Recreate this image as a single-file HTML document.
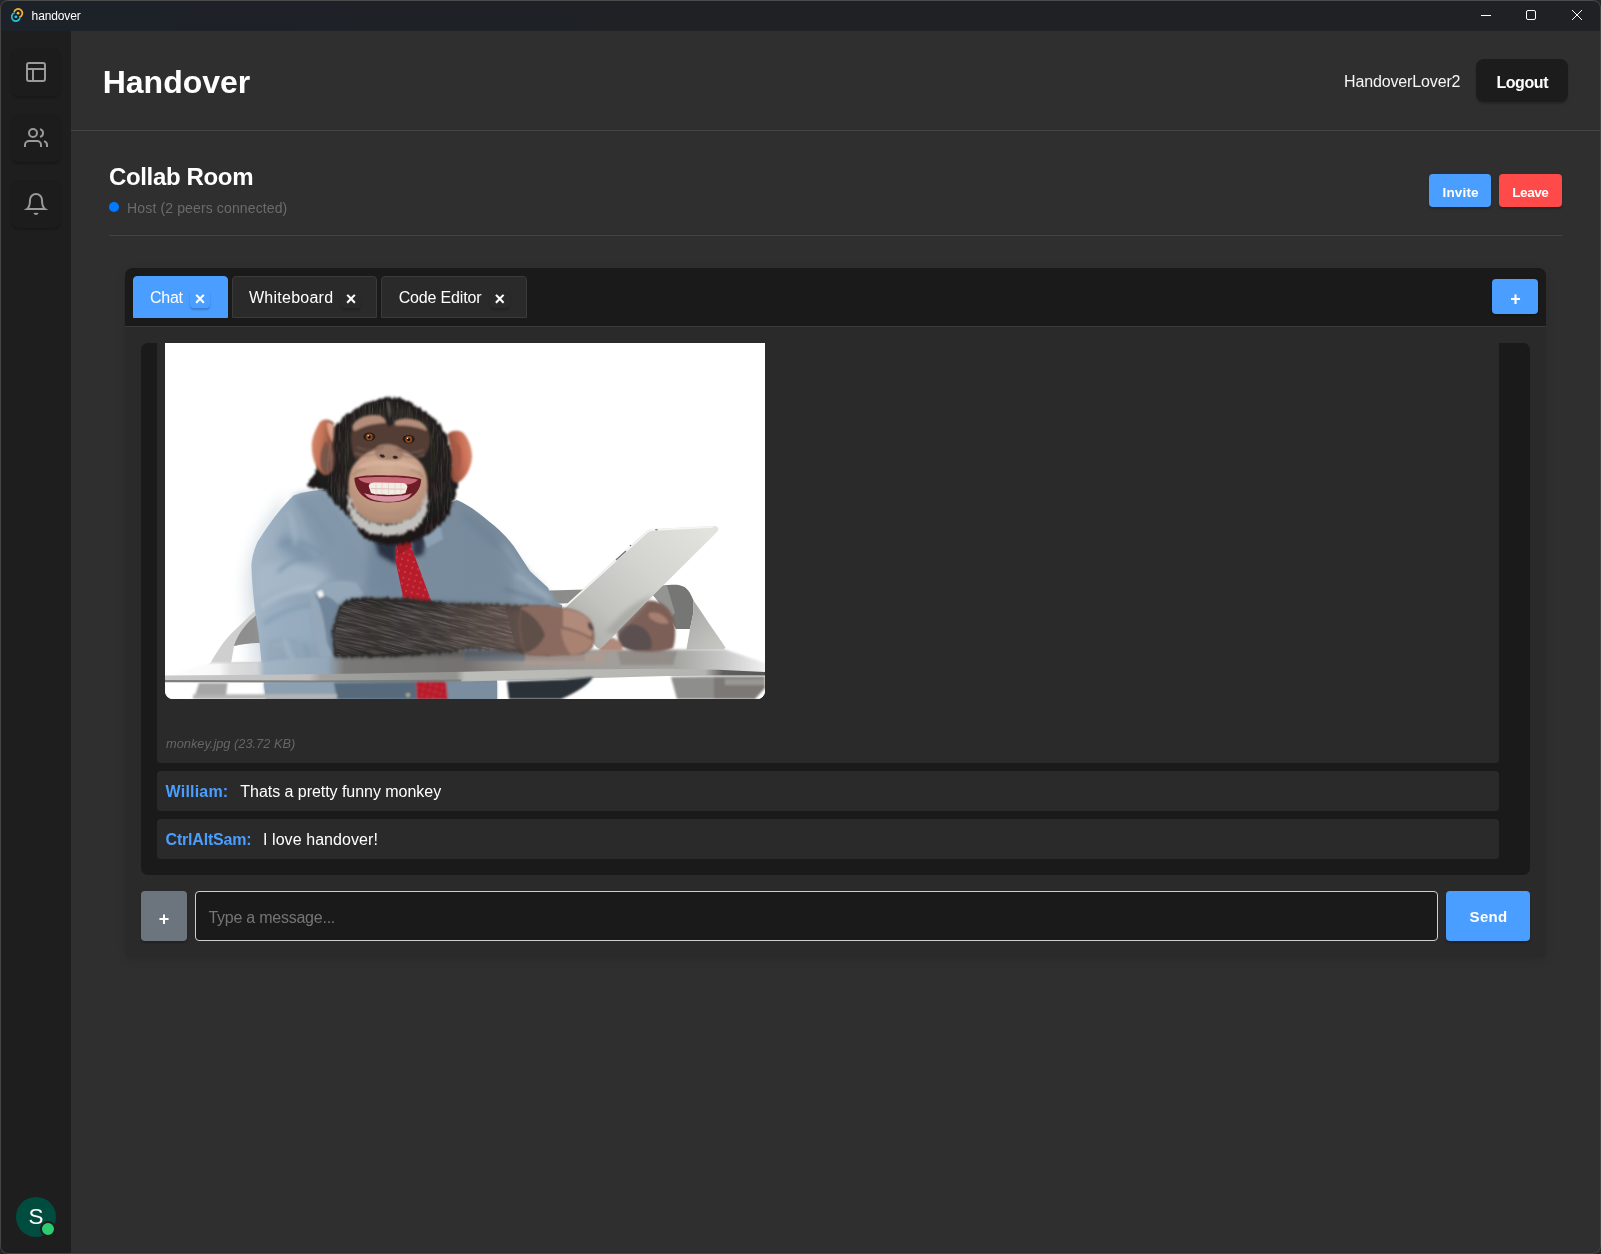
<!DOCTYPE html>
<html lang="en">
<head>
<meta charset="utf-8">
<title>handover</title>
<style>
*{box-sizing:border-box;margin:0;padding:0}
html,body{width:1601px;height:1254px;overflow:hidden;background:#26262a}
body{font-family:"Liberation Sans",sans-serif;color:#f6f6f6;position:relative;font-size:16px}
.abs{position:absolute}
#win{will-change:transform;position:absolute;left:0;top:0;width:1601px;height:1254px;background:#2f2f2f;border:1px solid #454545;border-top-color:#4b4b4b;border-radius:8px;overflow:hidden}
#titlebar{position:absolute;left:0;top:0;width:1601px;height:30px;background:linear-gradient(90deg,#1d2129 0,#1f2125 40%,#202124 100%)}
#titlebar .ttl{letter-spacing:-0.12px;position:absolute;left:30.6px;top:8px;font-size:12px;line-height:14px;color:#fff}
#sidebar{position:absolute;left:0;top:30px;width:70px;height:1224px;background:#1e1e1e}
.sbtn{position:absolute;left:10px;width:50px;height:48px;border-radius:8px;background:#1c1c1c;box-shadow:0 2px 2px rgba(0,0,0,.2)}
.sbtn svg{position:absolute;left:13px;top:12px}
#header{position:absolute;left:70px;top:30px;width:1531px;height:100px;border-bottom:1px solid #444}
#header h1{position:absolute;left:31.7px;top:31px;font-size:32px;line-height:40px;font-weight:700;color:#fff}
#uname{letter-spacing:-0.14px;position:absolute;left:1273px;top:40.6px;font-size:16px;line-height:20px;color:#f6f6f6;white-space:nowrap}
#logout{position:absolute;left:1405px;top:28px;width:92px;height:42.5px;border-radius:8px;background:#1c1c1c;box-shadow:0 2px 2px rgba(0,0,0,.2);color:#fff;font-weight:700;font-size:16px;line-height:42px;text-align:left;padding-left:20.4px;padding-top:2.8px;letter-spacing:-0.42px}
#roomtitle{position:absolute;left:108px;top:160px;font-size:24px;line-height:32px;font-weight:700;color:#fff;white-space:nowrap;letter-spacing:-0.35px}
#dot{position:absolute;left:108px;top:201px;width:10px;height:10px;border-radius:50%;background:#007bff}
#status{letter-spacing:0.13px;position:absolute;left:126.1px;top:198px;font-size:14px;line-height:18px;color:#6b6b6b;white-space:nowrap}
.btn{position:absolute;height:33px;border-radius:4px;color:#fff;font-weight:700;font-size:13.5px;line-height:33px;padding-top:2.2px;text-align:left;box-shadow:0 2px 2px rgba(0,0,0,.2)}
#invite{left:1428px;top:173px;width:62px;background:#4a9eff;padding-left:13.6px;letter-spacing:0.14px}
#leave{left:1498px;top:173px;width:63px;background:#ff4a4a;padding-left:13.2px;letter-spacing:-0.4px}
#hr{position:absolute;left:108px;top:234px;width:1453px;height:1px;background:#444}
#panel{position:absolute;left:124px;top:267px;width:1421px;height:690px;border-radius:8px;background:#2a2a2a;overflow:hidden;box-shadow:0 2px 8px rgba(0,0,0,.1)}
#tabbar{position:absolute;left:0;top:0;width:1421px;height:59px;background:#1a1a1a;border-bottom:1px solid #3a3a3a}
.tab{position:absolute;top:8px;height:42px;border:1px solid #3a3a3a;border-radius:4px 4px 0 0;background:#2a2a2a;color:#fff;font-size:16px;line-height:40px;white-space:nowrap}
.tab.act{background:#4a9eff;border-color:#4a9eff}
.tab .lbl{position:absolute;left:16px;top:1px}
.tab .x{position:absolute;top:12px;width:20px;height:18px;border-radius:4px;box-shadow:0 2px 2px rgba(0,0,0,.2);font-size:18px;font-weight:700;line-height:18px;text-align:center;color:#fff}
#plus{position:absolute;left:1367px;top:11px;width:46px;height:35px;border-radius:4px;background:#4a9eff;color:#fff;box-shadow:0 2px 2px rgba(0,0,0,.2)}
#msgs{position:absolute;left:16px;top:75px;width:1389px;height:532px;border-radius:7px;background:#1a1a1a;overflow:hidden}
.msg{position:absolute;left:16px;width:1342px;background:#2a2a2a;border-radius:4px}
.msg .who{position:absolute;left:8.6px;top:11.2px;font-weight:700;color:#4a9eff;font-size:16px;line-height:20px;white-space:nowrap}
.msg .txt{position:absolute;top:11.2px;font-size:16px;line-height:20px;color:#fff;white-space:nowrap}
#fname{position:absolute;left:9px;top:392px;font-size:12.8px;line-height:16px;font-style:italic;color:#666;white-space:nowrap}
#attach{position:absolute;left:16px;top:623px;width:46px;height:50px;border-radius:4px;background:#6c757d;box-shadow:0 2px 2px rgba(0,0,0,.2)}
#input{position:absolute;left:70px;top:623px;width:1243px;height:50px;border-radius:4px;background:#1a1a1a;border:1px solid #d0d0d0}
#input span{letter-spacing:-0.24px;position:absolute;left:12.4px;top:16px;font-size:16px;line-height:20px;color:#757575;white-space:nowrap}
#send{position:absolute;left:1321px;top:623px;width:84px;height:50px;border-radius:4px;background:#4a9eff;color:#fff;font-weight:700;font-size:15px;letter-spacing:0.3px;line-height:50px;text-align:left;padding-left:23.6px;padding-top:1.3px;box-shadow:0 2px 2px rgba(0,0,0,.2)}
#avatar{position:absolute;left:15px;top:1196px;width:40px;height:40px;border-radius:50%;background:#004d40;color:#fff;font-size:22.5px;line-height:40px;text-align:center}
#online{position:absolute;left:39.2px;top:1219.6px;width:16px;height:16px;border-radius:50%;background:#2ecc71;border:2px solid #1e1e1e}
#plus span,#attach span{position:absolute;left:0;width:100%;text-align:center;font-size:18px;font-weight:700;line-height:20px;color:#fff}
#plus span{top:10px;left:0.5px}
#attach span{top:18.2px}
</style>
</head>
<body>
<div id="win">
<div id="titlebar">
  <svg class="abs" style="left:8px;top:5.4px" width="16" height="18" viewBox="9 6 16 18"><g fill="none" stroke-width="1.7" stroke-linecap="butt"><path d="M14.1,12.0 A4.2,4.2 0 1 1 19.3,17.2" stroke="#f0b52c"/><path d="M19.9,18.0 A4.2,4.2 0 1 1 14.7,12.8" stroke="#25c2d6"/></g><circle cx="18.1" cy="13.2" r="1.4" fill="#f5bb2e"/><circle cx="15.9" cy="16.8" r="1.4" fill="#27cfe4"/></svg>
  <div class="ttl">handover</div>
  <svg class="abs" style="left:1469px;top:-1px" width="130" height="30" viewBox="1470 0 130 30"><g fill="none" stroke="#fff" stroke-width="1"><path d="M1481,15.5h10"/><rect x="1526.5" y="10.5" width="9" height="9" rx="1.5"/><path d="M1572,10l10,10M1582,10l-10,10"/></g></svg>
</div>
<div id="sidebar">
  <div class="sbtn" style="top:17px"><svg width="24" height="24" viewBox="0 0 24 24" fill="none" stroke="#9a9a9a" stroke-width="2" stroke-linecap="butt" stroke-linejoin="miter" stroke-miterlimit="10"><rect width="18" height="18" x="3" y="3" rx="2"/><path d="M3 9h18"/><path d="M9 21V9"/></svg></div>
  <div class="sbtn" style="top:83px"><svg width="24" height="24" viewBox="0 0 24 24" fill="none" stroke="#9a9a9a" stroke-width="2" stroke-linecap="butt" stroke-linejoin="miter" stroke-miterlimit="10"><path d="M17 21v-2a4 4 0 0 0-4-4H5a4 4 0 0 0-4 4v2"/><circle cx="9" cy="7" r="4"/><path d="M23 21v-2a4 4 0 0 0-3-3.87"/><path d="M16 3.13a4 4 0 0 1 0 7.75"/></svg></div>
  <div class="sbtn" style="top:149px"><svg width="24" height="24" viewBox="0 0 24 24" fill="none" stroke="#9a9a9a" stroke-width="2" stroke-linecap="butt" stroke-linejoin="miter" stroke-miterlimit="10"><path d="M18 8A6 6 0 0 0 6 8c0 7-3 9-3 9h18s-3-2-3-9"/><path d="M13.73 21a2 2 0 0 1-3.46 0"/></svg></div>
</div>
<div id="avatar">S</div><div id="online"></div>
<div id="header">
  <h1>Handover</h1>
  <div id="uname">HandoverLover2</div>
  <div id="logout">Logout</div>
</div>
<div id="roomtitle">Collab Room</div>
<div id="dot"></div>
<div id="status">Host (2 peers connected)</div>
<div class="btn" id="invite">Invite</div>
<div class="btn" id="leave">Leave</div>
<div id="hr"></div>
<div id="panel">
  <div id="tabbar">
    <div class="tab act" style="left:8px;width:95px"><span class="lbl" style="letter-spacing:-0.27px">Chat</span><span class="x" style="left:56px;top:13px">×</span></div>
    <div class="tab" style="left:107px;width:145px"><span class="lbl" style="letter-spacing:0.25px">Whiteboard</span><span class="x" style="left:108px;top:12.5px">×</span></div>
    <div class="tab" style="left:256px;width:146px"><span class="lbl" style="left:16.7px;letter-spacing:-0.17px">Code Editor</span><span class="x" style="left:107.7px;top:12.5px">×</span></div>
    <div id="plus"><span>+</span></div>
  </div>
  <div id="msgs">
    <div class="msg" style="top:-40px;height:460px">
      <div id="photo" style="position:absolute;left:8px;top:40px;width:600px;height:356px;background:#fff;border-radius:0 0 8px 8px;overflow:hidden"><svg width="600" height="356" viewBox="0 0 600 356" style="display:block">
<defs>
  <filter id="b05" x="-10%" y="-10%" width="120%" height="120%"><feGaussianBlur stdDeviation="0.5"/></filter>
  <filter id="b1" x="-10%" y="-10%" width="120%" height="120%"><feGaussianBlur stdDeviation="1"/></filter>
  <filter id="b2" x="-20%" y="-20%" width="140%" height="140%"><feGaussianBlur stdDeviation="2"/></filter>
  <filter id="b3" x="-30%" y="-30%" width="160%" height="160%"><feGaussianBlur stdDeviation="3.5"/></filter>
  <filter id="b6" x="-50%" y="-50%" width="200%" height="200%"><feGaussianBlur stdDeviation="7"/></filter>
  <filter id="fur" x="-10%" y="-10%" width="120%" height="120%">
    <feTurbulence type="fractalNoise" baseFrequency="0.35 0.12" numOctaves="2" seed="3" result="n"/>
    <feDisplacementMap in="SourceGraphic" in2="n" scale="6" xChannelSelector="R" yChannelSelector="G"/>
    <feGaussianBlur stdDeviation="1"/>
  </filter>
  <filter id="furb" x="-20%" y="-20%" width="140%" height="140%">
    <feTurbulence type="fractalNoise" baseFrequency="0.5 0.2" numOctaves="2" seed="7" result="n"/>
    <feDisplacementMap in="SourceGraphic" in2="n" scale="7" xChannelSelector="R" yChannelSelector="G"/>
    <feGaussianBlur stdDeviation="1.3"/>
  </filter>
  <filter id="furtex" x="-5%" y="-5%" width="110%" height="110%">
    <feTurbulence type="fractalNoise" baseFrequency="0.035 0.55" numOctaves="3" seed="11" result="t"/>
    <feColorMatrix in="t" type="matrix" values="0 0 0 0 1  0 0 0 0 0.96  0 0 0 0 0.92  2.4 0 0 0 -1.0" result="st"/>
    <feComposite in="st" in2="SourceAlpha" operator="in"/>
    <feGaussianBlur stdDeviation="0.35"/>
  </filter>
  <filter id="furtex2" x="-5%" y="-5%" width="110%" height="110%">
    <feTurbulence type="fractalNoise" baseFrequency="0.5 0.05" numOctaves="3" seed="4" result="t"/>
    <feColorMatrix in="t" type="matrix" values="0 0 0 0 1  0 0 0 0 0.96  0 0 0 0 0.92  2.4 0 0 0 -1.0" result="st"/>
    <feComposite in="st" in2="SourceAlpha" operator="in"/>
    <feGaussianBlur stdDeviation="0.35"/>
  </filter>
  <linearGradient id="shirtG" gradientUnits="userSpaceOnUse" x1="86" y1="0" x2="400" y2="0">
    <stop offset="0" stop-color="#a6b8c8"/><stop offset="0.12" stop-color="#95a9bb"/><stop offset="0.3" stop-color="#899db0"/><stop offset="0.45" stop-color="#7b8e9f"/><stop offset="0.75" stop-color="#788a9a"/><stop offset="1" stop-color="#8094a5"/>
  </linearGradient>
  <linearGradient id="tabG" gradientUnits="userSpaceOnUse" x1="540" y1="185" x2="430" y2="300">
    <stop offset="0" stop-color="#e2e2de"/><stop offset="0.45" stop-color="#d3d3cf"/><stop offset="0.8" stop-color="#c2c2be"/><stop offset="1" stop-color="#b0b0ac"/>
  </linearGradient>
  <linearGradient id="armG" gradientUnits="userSpaceOnUse" x1="170" y1="0" x2="400" y2="0">
    <stop offset="0" stop-color="#353130"/><stop offset="0.42" stop-color="#3d3836"/><stop offset="0.6" stop-color="#4f4541"/><stop offset="0.8" stop-color="#5e504a"/><stop offset="1" stop-color="#7e645a"/>
  </linearGradient>
  <linearGradient id="armV" x1="0" y1="0" x2="0" y2="1">
    <stop offset="0" stop-color="#000" stop-opacity="0.35"/><stop offset="0.25" stop-color="#000" stop-opacity="0"/><stop offset="0.8" stop-color="#000" stop-opacity="0"/><stop offset="1" stop-color="#000" stop-opacity="0.3"/>
  </linearGradient>
  <linearGradient id="bandG" gradientUnits="userSpaceOnUse" x1="0" y1="0" x2="600" y2="0">
    <stop offset="0" stop-color="#cacaca"/><stop offset="0.24" stop-color="#bebebe"/><stop offset="0.26" stop-color="#a2a2a0"/><stop offset="0.485" stop-color="#929290"/><stop offset="0.5" stop-color="#bcbcb8"/><stop offset="0.9" stop-color="#b4b4b0"/><stop offset="0.93" stop-color="#5e5e5e"/><stop offset="1" stop-color="#585858"/>
  </linearGradient>
  <linearGradient id="surfG" gradientUnits="userSpaceOnUse" x1="0" y1="0" x2="600" y2="0">
    <stop offset="0" stop-color="#ffffff"/><stop offset="0.09" stop-color="#f8f8f8"/><stop offset="0.11" stop-color="#dedede"/><stop offset="0.155" stop-color="#d2d4d6"/><stop offset="0.165" stop-color="#a2b5c5"/><stop offset="0.27" stop-color="#94a7b8"/><stop offset="0.3" stop-color="#7a7977"/><stop offset="0.5" stop-color="#747270"/><stop offset="0.6" stop-color="#9c9894"/><stop offset="0.85" stop-color="#a4a4a0"/><stop offset="0.93" stop-color="#c8c8c8"/><stop offset="1" stop-color="#f0f0f0"/>
  </linearGradient>
  <radialGradient id="muzG" gradientUnits="userSpaceOnUse" cx="223" cy="125" r="60">
    <stop offset="0" stop-color="#d2ab94"/><stop offset="0.5" stop-color="#c79f88"/><stop offset="0.85" stop-color="#b48e78"/><stop offset="1" stop-color="#9a7a68"/>
  </radialGradient>
  <radialGradient id="headG" gradientUnits="userSpaceOnUse" cx="225" cy="110" r="80">
    <stop offset="0" stop-color="#2e2826"/><stop offset="0.7" stop-color="#221e1d"/><stop offset="1" stop-color="#1c1919"/>
  </radialGradient>
  <linearGradient id="earL" x1="0" y1="0" x2="1" y2="0.3">
    <stop offset="0" stop-color="#d98a6c"/><stop offset="0.5" stop-color="#c47458"/><stop offset="1" stop-color="#7a4a3c"/>
  </linearGradient>
  <linearGradient id="earR" x1="1" y1="0" x2="0" y2="0.3">
    <stop offset="0" stop-color="#dc9176"/><stop offset="0.45" stop-color="#c96e54"/><stop offset="1" stop-color="#8a4a3a"/>
  </linearGradient>
  <linearGradient id="standL" gradientUnits="userSpaceOnUse" x1="520" y1="260" x2="560" y2="300">
    <stop offset="0" stop-color="#a6a6a2"/><stop offset="1" stop-color="#c6c6c2"/>
  </linearGradient>
  <pattern id="dots" x="0" y="0" width="6" height="6" patternUnits="userSpaceOnUse" patternTransform="rotate(15)">
    <rect width="6" height="6" fill="#b81c2b"/><circle cx="3" cy="3" r="0.6" fill="#e8a8a8"/>
  </pattern>
</defs>
<rect width="600" height="356" fill="#fff"/>
<!-- soft shadow left of body -->
<path d="M120,150 C95,180 78,215 80,250 L86,330 L110,330 L120,200 Z" fill="#dfe5ea" filter="url(#b6)"/>
<!-- chair left -->
<g filter="url(#b05)">
  <path d="M45,321 C52,308 60,296 70,287 C77,280 83,274 90,268 L96,270 L96,300 C86,300 77,301 69,303 L66,321 Z" fill="#cfcfcf"/>
  <path d="M69,303 C73,290 82,279 93,271 L96,300 C86,300 77,301 69,303 Z" fill="#8e8e8e"/>
  <path d="M45,320 L98,319 L98,321 L44,322 Z" fill="#c8c8c8"/>
</g>
<!-- chair back right -->
<path d="M384,247.5 L420,246.5 L408,260 L386,261 Z" fill="#8c8c8a" filter="url(#b05)"/>
<!-- stand right -->
<g filter="url(#b05)">
  <path d="M497,242.8 C503,242 508,241.6 513.5,241.9 C519,243 524,245 528.5,257.5 L528.5,269 L525,286 L511,286 L504,272 L488,252 Z" fill="#767674"/>
  <path d="M497,242.8 L502,243 L510,270 L506,274 L488,252 Z" fill="#949492"/>
  <path d="M528.5,257.5 C533,264 537,270 542,277.4 L560.4,304.3 L559,306.5 L521.4,306.5 L525,286 L528.5,269 Z" fill="url(#standL)"/>
</g>
<!-- shirt -->
<g filter="url(#b05)">
  <path d="M161,147 C150,147 138,149 128.7,152.4 C118,162 103,182 92.3,199.3 C87,212 86,220 86.6,227.7 C87,240 88.5,252 89.4,263.2 L93.7,291.6 L96.5,320 L100.8,356 L332,356 L332,336 L400,320 L397,262 C390,260 386,252 383,244.7 C376,238 370,233 364.7,227.7 C359,219 354,211 349,203.5 C341,193 333,185 323.5,178 C314,170 304,162 292,157 L260,170 L190,170 Z" fill="url(#shirtG)"/>
</g>
<!-- shirt shading -->
<g filter="url(#b3)">
  <path d="M128,153 C140,150 152,150 160,148 L185,185 L205,230 L175,240 L150,200 Z" fill="#7f95a8" opacity="0.8"/>
  <path d="M92,225 C110,215 140,218 165,232 L150,250 C130,245 108,248 90,258 Z" fill="#a9bccc" opacity="0.7"/>
  <path d="M118,190 C130,195 142,202 150,212 L140,222 C130,214 120,208 112,205 Z" fill="#7a92a6" opacity="0.7"/>
  <path d="M95,270 C110,262 128,260 146,262 L150,300 C130,296 112,296 96,300 Z" fill="#9aafc1" opacity="0.6"/>
  <path d="M100,300 C115,304 130,306 146,306 L150,356 L102,356 Z" fill="#8ea3b6" opacity="0.6"/>
  <path d="M205,196 L232,200 L238,255 L200,252 Z" fill="#70849a" opacity="0.7"/>
  <path d="M262,196 L300,170 C320,185 340,205 355,230 L372,255 L270,258 Z" fill="#788c9e" opacity="0.6"/>
  <path d="M340,200 C352,215 362,228 380,246 L392,262 L350,260 C350,240 346,220 336,206 Z" fill="#8ea2b4" opacity="0.7"/>
  <path d="M300,168 C312,176 324,186 334,198 L326,204 C316,192 306,182 296,176 Z" fill="#6c8094" opacity="0.6"/>
</g>
<!-- wrinkles -->
<g filter="url(#b2)" fill="none" stroke-linecap="round">
  <path d="M116,200 C130,196 146,200 158,212" stroke="#7890a6" stroke-width="3" opacity="0.8"/>
  <path d="M114,228 C126,216 140,212 156,216" stroke="#7e96ab" stroke-width="4" opacity="0.8"/>
  <path d="M98,262 C112,252 130,246 150,244" stroke="#b0c2d0" stroke-width="5" opacity="0.8"/>
  <path d="M100,280 C114,270 128,264 146,262" stroke="#8098ae" stroke-width="4" opacity="0.7"/>
  <path d="M104,300 C112,296 122,296 132,300" stroke="#8aa0b4" stroke-width="3" opacity="0.7"/>
  <path d="M120,298 C124,310 128,320 134,330" stroke="#aabccb" stroke-width="4" opacity="0.7"/>
  <path d="M140,300 C142,312 146,322 150,330" stroke="#8098ae" stroke-width="3" opacity="0.7"/>
  <path d="M124,170 C128,180 130,190 130,200" stroke="#a8bac9" stroke-width="4" opacity="0.6"/>
  <path d="M136,160 C150,170 160,184 166,200" stroke="#7a90a4" stroke-width="3" opacity="0.6"/>
  <path d="M330,200 C340,212 350,226 360,242" stroke="#6c8094" stroke-width="3" opacity="0.6"/>
  <path d="M352,232 C362,240 372,248 384,254" stroke="#a2b4c4" stroke-width="4" opacity="0.7"/>
  <path d="M340,246 C352,250 364,254 378,258" stroke="#64788c" stroke-width="3" opacity="0.7"/>
</g>
<!-- rolled sleeve -->
<g filter="url(#b1)">
  <path d="M146,248 C158,238 176,236 192,240 L200,256 C188,254 180,258 176,262 C170,276 168,296 172,314 L156,314 C148,296 144,270 146,248 Z" fill="#94a8ba"/>
  <path d="M150,252 C156,262 160,280 162,300 L168,312 L174,300 C170,286 170,272 174,262 C166,254 158,250 150,252 Z" fill="#71869a"/>
  <path d="M152,249 L157,247 L159,253 L154,255 Z" fill="#f2f2f2"/>
</g>
<!-- collar dark -->
<g filter="url(#b2)">
  <path d="M208,192 L232,200 L232,222 L214,212 Z" fill="#2c3342"/>
  <path d="M246,192 L262,190 L258,212 L248,214 Z" fill="#2e3646"/>
</g>
<path d="M255,186 L275,180 L278,196 L262,205 Z" fill="#8da1b3" filter="url(#b1)"/>
<!-- tie -->
<g filter="url(#b05)">
  <path d="M233,192 L245,188 L247,206 L266,257.5 L272,262 L238,262 L237.6,251.8 L230.5,217.7 L231,208 Z" fill="url(#dots)"/>
  <path d="M233,192 L245,188 L246,204 L233,212 Z" fill="#9c1a28"/>
</g>
<!-- head fur -->
<g filter="url(#fur)">
  <path d="M222.4,54.4 C236,54 244,58 250,62.5 C258,67 264,71 268.6,75 C274,80 278,85 281,90 C285,98 288,110 289,122 C292,130 293,136 292.4,142 C292,150 290,155 287.4,160 C284,172 276,184 262,192 C250,200 236,203 222,201 C210,201 200,196 195,190 C192,184 190,180 187.4,177.4 C182,172 178,168 175,165 C170,160 164,153 160,147.4 C154,146 147,144.5 141.2,142.4 C146,138 149,132 150,127.5 C156,120 160,110 163,100 C164,92 166,86 170,82.5 C174,78 177,75 181.2,72.5 C188,67 194,64 200,61.2 C208,57 215,54.6 222.4,54.4 Z" fill="url(#headG)"/>
</g>
<!-- ears -->
<g filter="url(#b1)">
  <path d="M169,80 C165,76 159,75 155,79 C150,87 146.5,96 146.8,104 C147,115 151,126 158,131.5 C162,133.5 166,131 168,127 C170,120 169,112 168,104 C167,96 167,88 169,80 Z" fill="url(#earL)"/>
  <path d="M161,98 C155,106 153,120 158,130 C163,132 167,129 168,125 C168,116 166,106 161,98 Z" fill="#7a5448"/>
  <path d="M162,80 C166,79 169,82 169,86 L168,100 C165,94 162,88 162,80 Z" fill="#e0a088"/>
  <path d="M282,92 C285,88 291,86.5 297,89 C303,94 307,104 307,114 C306,126 300,136 293,139.5 C289,140.5 286,137 286,131 C288,118 286,104 282,92 Z" fill="url(#earR)"/>
  <path d="M287,99 C291,98 295,102 296,108 C297,118 295,128 291,134 C289,128 290,112 287,99 Z" fill="#a65a46"/>
</g>
<g opacity="0.12"><g filter="url(#furtex2)">
  <path d="M222.4,58 C236,58 250,64 262,74 C272,82 280,94 284,110 C288,126 290,142 286,158 C280,176 270,188 258,194 L266,150 L266,92 C262,84 254,78 242,76 L226,80 L212,74 C200,72 190,76 186,86 L182,140 L186,176 C178,170 170,160 164,150 C160,130 162,106 168,88 C176,74 196,60 222.4,58 Z" fill="#fff"/>
</g></g>
<!-- top-of-head light streak -->
<path d="M222,57 C226,60 227,68 225,76 C223,70 221,64 222,57 Z" fill="#6a6464" opacity="0.7" filter="url(#b1)"/>
<!-- face -->
<g filter="url(#b1)">
  <!-- eye mask -->
  <path d="M187,86 C190,78 200,74 212,76 C218,77 222,80 224.5,84 C228,79 234,77 242,77.5 C254,78 262,84 265,92 C266,100 264,108 258,114 C250,112 240,108 232,104 L224,102 L214,106 C206,110 198,114 190,116 C186,106 185,96 187,86 Z" fill="#523d36"/>
  <!-- brow ridges -->
  <path d="M187.4,82.5 C192,74 204,70.5 215,72.5 C219,74 221,77 221.2,80 C212,80 200,82 190,88 C188,87 187,85 187.4,82.5 Z" fill="#b48c7a"/>
  <path d="M230,78 C236,74.5 246,74.5 254,78 C259,80.5 262,84 262.4,88 C254,84 242,82 231,82.5 C229.5,81 229.5,79.5 230,78 Z" fill="#b48c7a"/>
  <!-- muzzle -->
  <path d="M223,104 C234,104 246,110 254,118 C262,126 264,140 262,152 C260,164 252,174 240,179 C230,182 216,182 206,179 C194,174 186,164 184,152 C182,138 184,126 192,118 C200,110 212,104 223,104 Z" fill="url(#muzG)"/>
  <!-- nose bridge shading -->
  <path d="M212,104 C216,100 230,100 236,106 C240,110 238,116 232,118 L216,117 C210,115 208,108 212,104 Z" fill="#a58270"/>
</g>
<g filter="url(#b1)" fill="none" stroke-linecap="round">
  <path d="M192,104 C200,108 210,108 218,104" stroke="#7a5e52" stroke-width="1.6" opacity="0.8"/>
  <path d="M190,110 C198,114 208,113 215,109" stroke="#8a6c5e" stroke-width="1.4" opacity="0.7"/>
  <path d="M232,106 C240,110 250,111 258,107" stroke="#7a5e52" stroke-width="1.6" opacity="0.8"/>
  <path d="M236,112 C244,115 252,115 259,112" stroke="#8a6c5e" stroke-width="1.4" opacity="0.7"/>
  <path d="M196,124 C204,120 214,119 223,120 C232,119 244,121 252,126" stroke="#dab8a2" stroke-width="5" opacity="0.6"/>
  <path d="M188,132 C192,128 196,126 200,126" stroke="#a07e6c" stroke-width="2" opacity="0.6"/>
  <path d="M258,134 C254,129 250,127 246,127" stroke="#a07e6c" stroke-width="2" opacity="0.6"/>
  <path d="M208,168 C216,172 230,172 238,168" stroke="#b08e7c" stroke-width="4" opacity="0.6"/>
</g>
<g filter="url(#b05)">
  <!-- eyes -->
  <ellipse cx="204.3" cy="93.7" rx="6" ry="4.2" fill="#2a1c18"/>
  <ellipse cx="243.7" cy="96.2" rx="6" ry="4.2" fill="#2a1c18"/>
  <circle cx="204.3" cy="93.9" r="3.4" fill="#8c4a1e"/><circle cx="204.3" cy="93.9" r="1.5" fill="#160c08"/>
  <circle cx="243.7" cy="96.4" r="3.4" fill="#8c4a1e"/><circle cx="243.7" cy="96.4" r="1.5" fill="#160c08"/>
  <circle cx="203.2" cy="92.8" r="0.7" fill="#fff"/><circle cx="242.6" cy="95.3" r="0.7" fill="#fff"/>
  <!-- nostrils -->
  <path d="M214.5,112 C216,110.5 219,111 220,113.5 C218.5,115.5 215.5,115 214.5,112 Z" fill="#3a2622"/>
  <path d="M227.5,114 C229,112 232,112.5 233,114.5 C232,116.5 228.5,116.5 227.5,114 Z" fill="#3a2622"/>
  <!-- mouth -->
  <path d="M189.3,135 C196,132.5 210,132 223,132.6 C236,132.4 250,133.5 256.2,136.2 C256,146 250,154 240,157.5 C232,160 214,160 206,157.5 C196,154 190,146 189.3,135 Z" fill="#6e1e28"/>
  <path d="M193,135.5 C205,133.4 240,133.6 253,136.8 C250,140 246,141.5 241,141.5 L205,140.5 C200,140 196,138.5 193,135.5 Z" fill="#c66a78"/>
  <path d="M203.7,143 C204,140 208,139 212,139.5 L236,140 C240,140 242.4,141.5 242.4,144 L240.5,150 C236,152.6 210,152.4 206,150 Z" fill="#f3ece4"/>
  <path d="M206,145.6 L240,146.2" stroke="#c9a9a0" stroke-width="0.6" fill="none"/>
  <path d="M211,140 v12 M217,140 v12 M223.5,140 v12 M230,140 v12 M236,140 v12" stroke="#d8c0b8" stroke-width="0.5" fill="none"/>
  <path d="M199,150 C208,154 238,154.5 247,150 C244,156 236,158.8 223.7,158.8 C212,158.8 203,156 199,150 Z" fill="#d795a4"/>
</g>
<!-- beard -->
<g filter="url(#furb)">
  <path d="M183,146 C185,157 189,166 195,172 C201,178 210,181 222.4,181.5 C235,181 245,177 251,171 C256,165 260,156 261.5,148 C264,158 263,170 257,179 C250,188 236,192.5 222,192.5 C208,192.5 196,188 189,179 C182,170 181,157 183,146 Z" fill="#c2c0bc"/>
</g>
<!-- table surface -->
<g filter="url(#b1)">
  <path d="M45,320 L98,319 C130,314 170,314 200,313 L300,308 L420,306.5 L560,306.5 L600,320 L600,330 L0,336 L0,332 Z" fill="url(#surfG)"/>
  <path d="M300,307 L360,308 L420,308 L420,318 L300,318 Z" fill="#5d6b7a" opacity="0.6"/>
  <path d="M360,309 C390,312 420,312 440,309 L440,320 L360,322 Z" fill="#b09a90" opacity="0.7"/>
  <path d="M452,308 L512,308 L508,322 L456,322 Z" fill="#8c8480" opacity="0.7"/>
</g>
<!-- arm -->
<g filter="url(#fur)">
  <path d="M176,260 C184,256 192,254.6 200,254.6 C214,254.6 228,255 242.6,255.4 C256,256.5 270,258 285.2,259.6 C300,260.4 314,260.8 327.8,261 L384.5,263.2 L390,312 L356,310 C336,308 318,306 299.4,305.8 C294,308 290,309.5 285.2,310 C256,312 228,314 200,314.3 L170,314.5 C165,298 167,276 176,260 Z" fill="url(#armG)"/>
</g>
<path d="M176,260 C184,256 192,254.6 200,254.6 L384.5,263.2 L390,312 L170,314.5 C165,298 167,276 176,260 Z" fill="url(#armV)" filter="url(#b2)"/>
<g transform="rotate(14 280 285)" opacity="0.2"><g filter="url(#furtex)"><g transform="rotate(-14 280 285)">
  <path d="M178,262 C186,258 194,257 200,257 L285,262 L340,264 L352,308 L300,304 L285,308 L200,312 L172,312 C168,298 170,276 178,262 Z" fill="#fff"/>
</g></g></g>
<!-- right hand (behind tablet) -->
<g filter="url(#b1)">
  <path d="M456,270 C462,262 474,258 486,257.5 C496,258 504,264 508,274 C511,284 511,296 508,305 C500,309 486,309.5 474,308.6 C464,308 456,304 453,296 C451,286 452,278 456,270 Z" fill="#7c6058"/>
  <path d="M455,286 C462,280 472,280 480,286 C486,292 488,300 486,306 C476,309 464,308 456,303 C453,298 453,292 455,286 Z" fill="#5c5050"/>
  <path d="M484,270 C492,268 500,272 504,280 C498,282 490,280 484,274 Z" fill="#a88072"/>
  <path d="M436,296 C442,292 450,294 456,300 L458,308 L434,308 Z" fill="#b08a7c"/>
</g>
<!-- tablet -->
<g filter="url(#b05)">
  <path d="M398,264.5 L478.5,191 C481,188 484,186.3 488,185.9 L548,183 C553,182.8 555,185.5 552,189 L489,251.5 L438,303.5 C435.5,306 432.5,306 430.5,303 Z" fill="url(#tabG)"/>
  <path d="M398.6,265.2 L479,192 C481.5,189 484.5,187.3 488,186.9 L548,184" fill="none" stroke="#f6f6f4" stroke-width="1.6"/>
  <path d="M451,217 L461,208" stroke="#77777a" stroke-width="1.4" fill="none"/>
  <circle cx="465.5" cy="202.5" r="0.8" fill="#666"/>
  <ellipse cx="491.5" cy="186.8" rx="1.6" ry="0.8" fill="#888"/>
</g>
<path d="M440,290 C455,270 470,258 488,252 L476,266 L452,292 Z" fill="#9c9c98" opacity="0.6" filter="url(#b2)"/>
<!-- left hand -->
<g filter="url(#b1)">
  <path d="M356,264 C368,261 384,262 398,264.6 C410,266 420,270 426,278 C430,286 430.5,296 428,304 C424,310 414,312.5 402,312.5 C388,313 372,312.5 360,311 C354,296 353,278 356,264 Z" fill="#8a6b5f"/>
  <path d="M398,266 C410,267 420,271 425,278 C428,284 428,290 426,294 C416,290 406,286 398,284 Z" fill="#b08a7a"/>
  <path d="M396,286 C408,288 420,292 428,298 C426,306 418,311 406,312 C400,304 397,296 396,286 Z" fill="#a98272"/>
  <path d="M356,266 C366,270 376,280 380,292 C376,302 368,308 360,310 C355,296 354,280 356,266 Z" fill="#5e4f4a"/>
  <path d="M398,284 C408,286 418,290 426,295" stroke="#7a5a50" stroke-width="0.8" fill="none"/>
  <path d="M423,279 C427,280 429,284 428,288 C425,288 422,284 423,279 Z" fill="#5a4a48"/>
</g>
<!-- table band -->
<g filter="url(#b05)">
  <path d="M0,332.5 L100,331.8 L200,330.5 L300,328.7 L400,326.5 L500,325.8 L553,326.8 L600,329 L600,332.5 L553,332.6 L500,333 L400,336 L300,338.4 L150,339 L0,338.7 Z" fill="url(#bandG)"/>
  <path d="M0,337 L150,337.4 L296,336.6 L296,338.6 L150,339.4 L0,339.2 Z" fill="#7e7e7c"/>
</g>
<!-- under table -->
<g filter="url(#b1)">
  <path d="M99,340 L332,339 L332,356 L101,356 Z" fill="#7a8ea0"/>
  <path d="M99,340 L169,340 L172,356 L101,356 Z" fill="#8ca0b2"/>
  <path d="M169,340 L251,339 L252,356 L172,356 Z" fill="#566a7c"/>
  <path d="M251,339 L281,339 L283,356 L252,356 Z" fill="url(#dots)"/>
  <circle cx="243" cy="352" r="2" fill="#b0b090"/>
  <path d="M342,338.5 L400,336.5 L428,334 C424,342 410,350 396,356 L344,356 Z" fill="#2c3038"/>
  <path d="M30,352.6 L34,340 L62.5,340 L61,352.6 Z" fill="#a6a6a6"/>
  <path d="M28,351.5 L172,351 L172,356 L28,356 Z" fill="#b4b4b4"/>
  <path d="M506,334 L549,333.5 L549,356 L512,356 Z" fill="#8e8e8c"/>
  <path d="M549,333.5 L600,333.5 L600,345 L590,356 L549,356 Z" fill="#7c7874"/>
  <path d="M560,336 L600,336 L600,342 L560,342 Z" fill="#9a9894"/>
</g>
</svg>
</div>
      <div id="fname" style="top:433px">monkey.jpg (23.72 KB)</div>
    </div>
    <div class="msg" style="top:428px;height:40px"><span class="who" style="letter-spacing:0.2px">William:</span><span class="txt" style="left:83.3px;letter-spacing:-0.04px">Thats a pretty funny monkey</span></div>
    <div class="msg" style="top:476px;height:40px"><span class="who" style="letter-spacing:-0.21px">CtrlAltSam:</span><span class="txt" style="left:106px;letter-spacing:0.07px">I love handover!</span></div>
  </div>
  <div id="attach"><span>+</span></div>
  <div id="input"><span>Type a message...</span></div>
  <div id="send">Send</div>
</div>
</div>
</body>
</html>
